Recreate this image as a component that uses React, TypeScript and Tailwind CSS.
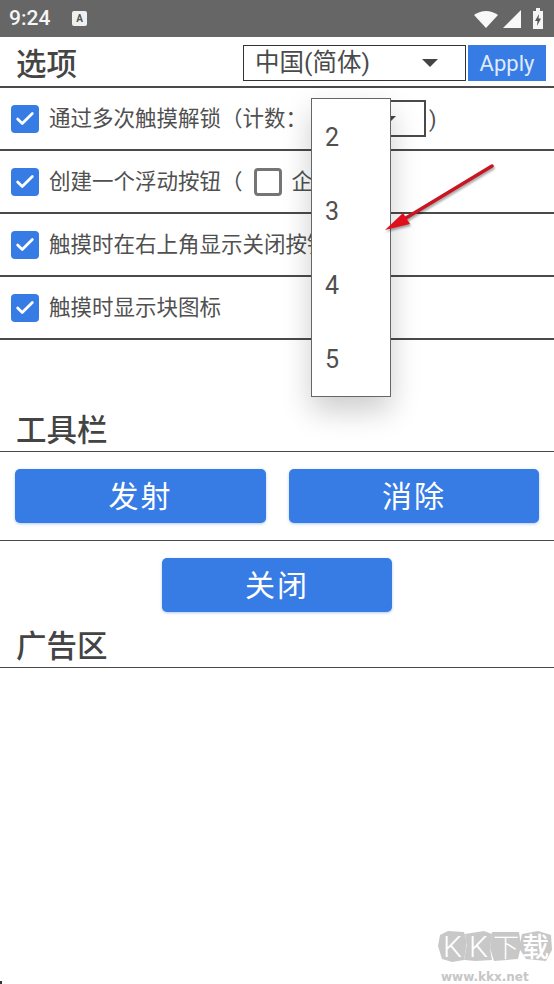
import { Check } from 'lucide-react';

const FONT = { fontFamily: '"Roboto", "Noto Sans CJK SC", sans-serif' };

function CheckBox({ checked = true }: { checked?: boolean }) {
    if (!checked) {
        return <div className="w-[28px] h-[28px] rounded-[4px] border-[3px] border-[#757575] bg-white shrink-0 ml-[1px]" />;
    }
    return (
        <div className="w-[28px] h-[28px] rounded-[4px] bg-[#377be4] flex items-center justify-center shrink-0">
            <Check size={22} strokeWidth={3} className="text-white" />
        </div>
    );
}

function OptionRow({ children }: { children: React.ReactNode }) {
    return (
        <div className="h-[63px] border-b-2 border-[#4a4a4a] pl-[11px] flex items-center gap-[10px] text-[21.5px] text-[#505050] whitespace-nowrap overflow-hidden">
            {children}
        </div>
    );
}

function SectionTitle({ children, className }: { children: React.ReactNode; className: string }) {
    return (
        <div className={`border-b border-[#4a4a4a] pl-[16px] pb-[2px] flex items-end text-[30.5px] leading-[36px] font-medium text-[#444444] ${className}`}>
            {children}
        </div>
    );
}

function BlueButton({ label, className }: { label: string; className: string }) {
    return (
        <button className={`h-[54px] rounded-[5px] bg-[#377be4] text-white text-[30px] tracking-[2px] shadow-[0_1px_3px_rgba(55,123,228,0.4)] ${className}`}>
            {label}
        </button>
    );
}

function StatusBar() {
    return (
        <div className="h-[37px] bg-[#666666] flex items-center pl-[9px] pr-[11px] text-[#f5f5f5]">
            <span className="text-[21px] font-medium w-[63px]">9:24</span>
            <div className="w-[15px] h-[15px] rounded-[2px] bg-[#f0f0f0] flex items-center justify-center text-[10px] font-bold leading-none text-[#555555]">
                A
            </div>
            <div className="ml-auto flex items-center">
                <svg width="24" height="18" viewBox="0 0 24 18">
                    <path d="M0 5 Q12 -3 24 5 L12 18 Z" fill="#f8f8f8" />
                </svg>
                <svg width="18" height="18" viewBox="0 0 18 18" className="ml-[5px]">
                    <path d="M18 0 V18 H0 Z" fill="#f8f8f8" />
                </svg>
                <svg width="10" height="21" viewBox="0 0 10 21" className="ml-[12px]">
                    <path d="M0 3 H3 V0 H7 V3 H10 V21 H0 Z" fill="#f5f5f5" />
                    <path d="M6 6 L2 13 H4.5 L4 18 L8 10.5 H5.5 Z" fill="#555555" />
                </svg>
            </div>
        </div>
    );
}

function Dropdown() {
    return (
        <div className="absolute left-[311px] top-[98px] w-[80px] h-[299px] bg-white border border-[#666666] shadow-[0_14px_30px_rgba(0,0,0,0.2)] flex flex-col text-[25px] text-[#505050]">
            {['2', '3', '4', '5'].map(n => (
                <div key={n} className="h-[74px] pl-[13px] pt-[4px] flex items-center">{n}</div>
            ))}
        </div>
    );
}

function Arrow() {
    return (
        <svg className="absolute left-[380px] top-[160px] drop-shadow-[1px_2px_1px_rgba(0,0,0,0.35)]" width="120" height="80" viewBox="0 0 120 80">
            <path d="M112 6 L26 58" stroke="#c81622" strokeWidth="3.5" strokeLinecap="round" />
            <path d="M5 70 L23 53 L30 64 Z" fill="#e00f1c" />
        </svg>
    );
}

// KKX download site stamp in the corner
function Watermark() {
    return (
        <svg className="absolute left-[434px] top-[926px]" width="120" height="58" viewBox="0 0 120 58">
            <g fill="#c8c8c8">
                <path d="M6 9 L14 5 L30 6 L33 16 L30 34 L18 36 L8 33 L4 20 Z" />
                <path d="M31 8 L50 5 L58 8 L56 22 L58 34 L42 35 L30 34 L33 18 Z" />
                <path d="M58 6 L85 6 L87 20 L84 33 L60 35 L56 22 Z" />
                <path d="M88 8 L104 5 L117 9 L118 24 L112 35 L92 33 L85 22 Z" />
            </g>
            <g fill="#ffffff" fontFamily="Roboto, sans-serif" fontWeight="300">
                <text x="9" y="31" fontSize="30">K</text>
                <text x="35" y="31" fontSize="30">K</text>
                <text x="59" y="31" fontSize="26" fontFamily="Noto Sans CJK SC, sans-serif">下</text>
                <text x="88" y="31" fontSize="27" fontFamily="Noto Sans CJK SC, sans-serif" fontWeight="500">载</text>
            </g>
            <text x="7" y="55" fontSize="12" fontWeight="700" fill="#c6c6c6" fontFamily="DejaVu Sans, sans-serif">www.kkx.net</text>
        </svg>
    );
}

export default function App() {
    return (
        <div className="relative w-[554px] h-[984px] bg-white overflow-hidden" style={FONT}>
            <StatusBar />

            {/* Header */}
            <div className="h-[51px] border-b-2 border-[#4a4a4a] pl-[16px] pr-[8px] flex items-center">
                <span className="text-[30.5px] font-medium text-[#444444] mt-[6px]">选项</span>
                <div className="ml-auto mt-[3px] w-[223px] h-[36px] border border-[#333333] pl-[11px] pr-[27px] flex items-center justify-between text-[24.5px] text-[#4a4a4a]">
                    <span>中国(简体)</span>
                    <div className="w-0 h-0 border-x-[8px] border-x-transparent border-t-[8px] border-t-[#444444]" />
                </div>
                <button className="ml-[2px] mt-[3px] w-[78px] h-[36px] bg-[#377be4] text-[#dfeafc] text-[22px]">Apply</button>
            </div>

            {/* Options */}
            <OptionRow>
                <CheckBox />
                <span className="mt-[2px]">通过多次触摸解锁（计数：</span>
                <div className="absolute left-[380px] top-[100px] w-[46px] h-[37px] border-2 border-[#4a4a4a] bg-white flex items-center justify-end pr-[28px]">
                    <div className="w-0 h-0 shrink-0 border-x-[5px] border-x-transparent border-t-[5px] border-t-[#444444]" />
                </div>
                <span className="absolute left-[429px] top-[104px]">)</span>
            </OptionRow>
            <OptionRow>
                <CheckBox />
                <span className="mt-[2px]">创建一个浮动按钮（</span>
                <CheckBox checked={false} />
                <span className="mt-[2px]">企</span>
            </OptionRow>
            <OptionRow>
                <CheckBox />
                <span className="mt-[2px]">触摸时在右上角显示关闭按钮</span>
            </OptionRow>
            <OptionRow>
                <CheckBox />
                <span className="mt-[2px]">触摸时显示块图标</span>
            </OptionRow>

            {/* Toolbar */}
            <SectionTitle className="h-[112px]">工具栏</SectionTitle>
            <div className="h-[89px] border-b border-[#4a4a4a] px-[15px] flex items-center justify-between">
                <BlueButton label="发射" className="w-[251px]" />
                <BlueButton label="消除" className="w-[250px]" />
            </div>
            <div className="flex justify-center pt-[17px]">
                <BlueButton label="关闭" className="w-[230px]" />
            </div>

            {/* Ad area */}
            <SectionTitle className="h-[56px]">广告区</SectionTitle>

            <Dropdown />
            <Arrow />
            <Watermark />
            <div className="absolute left-0 bottom-0 w-[2px] h-[3px] bg-[#333333]" />
        </div>
    );
}
